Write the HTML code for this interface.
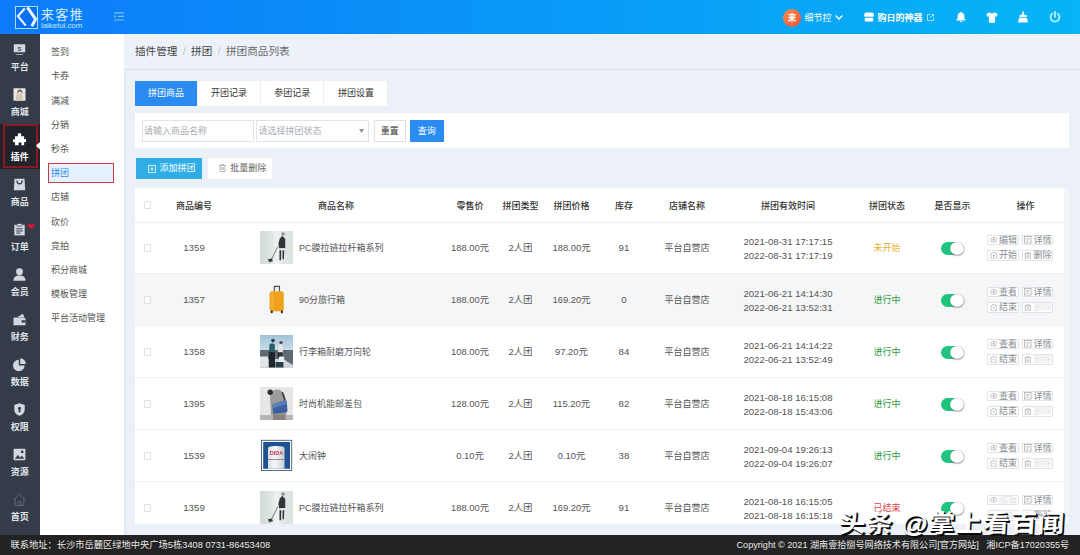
<!DOCTYPE html>
<html lang="zh-CN">
<head>
<meta charset="utf-8">
<title>拼团商品列表</title>
<style>
*{box-sizing:border-box;margin:0;padding:0}
html,body{width:1080px;height:555px;overflow:hidden}
body{position:relative;background:#ecf0f7;font-family:"Liberation Sans","Noto Sans CJK SC",sans-serif;font-size:9px;color:#555;line-height:1}
.abs{position:absolute}
/* header */
#hd{position:absolute;left:0;top:0;width:1080px;height:34px;background:linear-gradient(90deg,#0d7bfa,#06b5f5)}
#logo-box{position:absolute;left:15px;top:5.8px;width:22.5px;height:23px;border:1.3px solid #a9dcff;background:rgba(0,70,200,.22)}
#logo-t{position:absolute;left:40.8px;top:6.9px;font-size:13px;line-height:16px;color:#d3ecff;letter-spacing:1.5px;white-space:nowrap;font-weight:400}
#logo-s{position:absolute;left:41px;top:22px;font-size:7.8px;line-height:8px;color:#c9eaff;white-space:nowrap}
.hw{position:absolute;color:#fff;white-space:nowrap;font-size:9px;line-height:12px;top:11.7px}
/* dark side */
#s1{position:absolute;left:0;top:34px;width:39.5px;height:501px;background:#353c49}
.s1i{position:absolute;left:0;width:39.5px;height:45px}
.s1i span{position:absolute;left:0;width:39.5px;top:27.6px;text-align:center;font-size:9px;line-height:11px;font-weight:bold;color:#dfe3e8}
.s1i>svg:first-child{position:absolute;left:13.4px;top:9.2px;width:13px;height:13px}
/* white side */
#s2{position:absolute;left:39.5px;top:34px;width:84.5px;height:501px;background:#fff}
.s2i{position:absolute;left:11.5px;font-size:9px;line-height:12px;color:#525252;white-space:nowrap}
/* content */
#bc{position:absolute;left:135px;top:45px;font-size:10.6px;line-height:13px;color:#444;white-space:nowrap}
#bc i{font-style:normal;color:#c3c7cc;padding:0 5.4px}
#bc b{font-weight:normal;color:#6b6b6b}
.tab{position:absolute;top:81.2px;height:24.4px;width:63px;background:#fff;text-align:center;line-height:24px;font-size:9px;color:#333;border-right:1px solid #ecf0f7}
.tab.on{background:#2a8bf0;color:#fff}
#flt{position:absolute;left:135px;top:113.4px;width:934px;height:35px;background:#fff}
.inp{position:absolute;top:6.5px;height:22px;border:1px solid #e0e3e8;background:#fff;font-size:9px;line-height:21px;color:#a9adb3;padding-left:1.5px;white-space:nowrap}
.btn{position:absolute;text-align:center;white-space:nowrap}
table{border-collapse:collapse}
/* table rows */
#tb{position:absolute;left:135px;top:188px;width:929px;height:336px;background:#fff;overflow:hidden}
.tr{position:absolute;left:0;width:929px;height:52px;border-bottom:1px solid #edeff2}
.tr.g{background:#f5f6f8}
.c{position:absolute;transform:translateX(-50%);white-space:nowrap;font-size:9px;line-height:12px;top:20px;color:#555}
.th .c{font-weight:500;color:#333;top:11.7px}
.tr.th{border-bottom:1px solid #eceef1;height:35px}
.c.n{font-size:9.7px}
.c.m{font-size:9.4px}
.pi svg{filter:blur(0.45px)}
.ck{position:absolute;left:8.5px;width:7.5px;height:7.5px;border:1px solid #dcdfe4;border-radius:1px;background:#fff}
.tg{position:absolute;left:806.2px;top:19.5px;width:22.6px;height:13.5px;border-radius:7px;background:linear-gradient(90deg,#1fc47e 65%,rgba(31,196,126,0) 65%)}
.tg:after{content:"";position:absolute;right:0;top:0;width:13.5px;height:13.5px;border-radius:50%;background:#fff;box-shadow:0.3px 0.6px 1.2px rgba(0,0,0,.5),inset 0 0 0 0.4px rgba(0,0,0,.12)}
.ab{position:absolute;width:31.5px;height:10.5px;border:1px solid #e1e3e7;border-radius:1px;font-size:9px;line-height:9px;color:#8a8d92;white-space:nowrap;padding-left:11px;background:#fff}
.ab.d{color:#e1e3e7}
.ab.d svg{color:#a4a7ac}
.ab svg{position:absolute;left:1.8px;top:0.6px;width:7.6px;height:7.6px;color:#999ca1}
.dt{position:absolute;left:653px;transform:translateX(-50%);white-space:nowrap;font-size:9.6px;line-height:13.9px;top:12.6px;color:#555;text-align:center}
.pi{position:absolute;left:125px;top:9.3px;width:33px;height:33px;overflow:hidden}
.pn{position:absolute;left:164px;top:20px;font-size:9px;line-height:12px;white-space:nowrap;color:#555}
#ft{position:absolute;left:0;top:534.5px;width:1080px;height:20.5px;background:#232323;color:#e8e8e8;font-size:9px;line-height:20px;white-space:nowrap}
#wm{position:absolute;left:838.5px;top:509.7px;font-size:24.5px;line-height:28px;font-weight:bold;color:#fff;white-space:nowrap;transform-origin:left center;transform:scaleX(1.08) skewX(-3deg);text-shadow:1.6px 1.6px 0 #0a0a0a,0.8px 0.8px 0 #0a0a0a;letter-spacing:0.8px}
</style>
</head>
<body>
<!-- HEADER -->
<div id="hd">
  <div id="logo-box"><svg viewBox="0 0 22.5 23" width="22.5" height="23" style="position:absolute;left:-1.3px;top:-1.3px;overflow:visible"><path d="M9.8 2.6L2.9 10.1L10.8 19.6" fill="none" stroke="#e6f5ff" stroke-width="2.2"/><path d="M12.4 1.4L20.6 13.2L16.8 20.2" fill="none" stroke="#e6f5ff" stroke-width="3"/></svg></div>
  <div id="logo-t">来客推</div>
  <div id="logo-s">laiketui.com</div>
  <svg class="abs" style="left:113.8px;top:12.4px" width="10.4" height="9" viewBox="0 0 10.4 9"><path d="M0 0.9h10.4M3.6 4.4h6.8M0 8h10.4" stroke="#7cc4ff" stroke-width="1.1" fill="none"/><path d="M0.2 2.8L2.2 4.4L0.2 6z" fill="#7cc4ff"/></svg>
  <div class="abs" style="left:782.8px;top:8.8px;width:18.6px;height:18.6px;border-radius:50%;background:linear-gradient(135deg,#ff8f3e,#ee4f3e);color:#fff;font-size:8.6px;line-height:18.6px;text-align:center;font-weight:bold">来</div>
  <div class="hw" style="left:804.5px">细节控</div>
  <svg class="abs" style="left:835px;top:14.5px" width="8" height="5" viewBox="0 0 8 5"><path d="M0.5 0.5L4 4L7.5 0.5" stroke="#fff" stroke-width="1.3" fill="none"/></svg>
  <svg class="abs" style="left:864px;top:12px" width="10" height="10" viewBox="0 0 10 10"><path d="M1 0.5h8l1 3.3a1.2 1.2 0 0 1-1.2 1H1.2A1.2 1.2 0 0 1 0 3.8zM0.8 5.8h8.4V9.5H0.8z" fill="#fff"/></svg>
  <div class="hw" style="left:877.5px;font-weight:bold">购日的神器</div>
  <svg class="abs" style="left:926.5px;top:13.5px" width="7" height="7" viewBox="0 0 7 7"><path d="M3 0.5H0.5v6h6V4M3 4L6.5 0.5M4.3 0.5h2.2v2.2" stroke="#d4efff" stroke-width="0.8" fill="none"/></svg>
  <svg class="abs" style="left:955px;top:11px" width="12" height="12" viewBox="0 0 12 12"><path d="M6 0.8c0.5 0 0.8 0.3 0.8 0.8c1.6 0.4 2.5 1.7 2.5 3.4v2.2l1.2 1.6v0.6H1.5v-0.6l1.2-1.6V5c0-1.7 0.9-3 2.5-3.4C5.2 1.1 5.5 0.8 6 0.8zM4.8 10.1h2.4c0 0.7-0.5 1.2-1.2 1.2s-1.2-0.5-1.2-1.2z" fill="#fff"/></svg>
  <svg class="abs" style="left:985.5px;top:11.5px" width="12" height="11" viewBox="0 0 12 11"><path d="M4 0.3c0.4 0.9 1.1 1.3 2 1.3s1.6-0.4 2-1.3l3.6 1.5l-1 2.9l-1.5-0.4V10.7H2.9V4.3L1.4 4.7l-1-2.9z" fill="#fff"/></svg>
  <svg class="abs" style="left:1017px;top:11px" width="12" height="12" viewBox="0 0 12 12"><path d="M5.2 0.5h1.6v3.2h1.6c0.7 0 1.2 0.5 1.2 1.2v1H2.4v-1c0-0.7 0.5-1.2 1.2-1.2h1.6zM2.2 6.7h7.6l1.2 4.8H1z" fill="#fff"/></svg>
  <svg class="abs" style="left:1049px;top:11px" width="12" height="12" viewBox="0 0 12 12"><path d="M6 0.8v5" stroke="#bdf1ff" stroke-width="1.7" fill="none" stroke-linecap="round"/><path d="M3.4 2.6a4.4 4.4 0 1 0 5.2 0" stroke="#bdf1ff" stroke-width="1.7" fill="none" stroke-linecap="round"/></svg>
</div>

<!-- DARK SIDEBAR -->
<div id="s1">
  <div class="s1i" style="top:0px"><svg viewBox="0 0 13 13"><rect x="0.8" y="1.2" width="11.4" height="8" rx="0.5" fill="#d3d7df"/><rect x="2.8" y="11" width="7.4" height="0.9" fill="#aab0bc"/><text x="6.5" y="7.6" font-size="6" font-weight="bold" text-anchor="middle" fill="#353c49" font-family="Liberation Sans,sans-serif">S</text></svg><span>平台</span></div>
  <div class="s1i" style="top:45px"><svg viewBox="0 0 13 13"><rect x="0.5" y="0.3" width="12" height="12.4" fill="#ebe6e1"/><path d="M3 12.7V9c0-2.5 1.2-4.6 3.5-4.6s3.3 2 3.3 4.6v3.7z" fill="#d8c7b8"/><path d="M4.2 5.5c-0.3-2.5 1-4 2.6-4s3 1.3 2.7 3.8c-0.8-1-1.7-1.6-2.8-1.6s-1.8 0.6-2.5 1.8z" fill="#6b625c"/><circle cx="6.8" cy="5" r="1.5" fill="#e9d3c3"/></svg><span>商城</span></div>
  <div class="s1i" style="top:90px;background:#1f232a"><svg viewBox="0 0 13 13"><path d="M4.6 1.7a1.9 1.9 0 0 1 3.8 0c0 0.7-0.4 1-0.4 1.5h3.3v3.2c0.4 0 0.7-0.5 1.3-0.5a1.6 1.6 0 0 1 0 3.3c-0.6 0-0.9-0.5-1.3-0.5v3.8H8.2c0-0.5 0.5-0.9 0.5-1.6a1.7 1.7 0 0 0-3.4 0c0 0.7 0.5 1.1 0.5 1.6H1.7V8.9c-0.4 0-0.7 0.4-1.2 0.4a1.6 1.6 0 0 1 0-3.2c0.5 0 0.8 0.4 1.2 0.4V3.2H5c0-0.5-0.4-0.8-0.4-1.5z" fill="#fff" transform="translate(0.3,0.3) scale(0.96)"/></svg><span style="color:#fff">插件</span></div>
  <div class="s1i" style="top:135px"><svg viewBox="0 0 13 13"><path d="M1.5 0.8h10l0.7 11.4H0.8z" fill="#d3d7df"/><path d="M3.8 2.6c0 2 1.2 3.3 2.7 3.3S9.2 4.6 9.2 2.6" stroke="#353c49" stroke-width="1.2" fill="none"/></svg><span>商品</span></div>
  <div class="s1i" style="top:180px"><svg viewBox="0 0 13 13"><path d="M1.3 1.8h10.4v10.6H1.3z" fill="#d3d7df"/><rect x="3.8" y="0.5" width="5.4" height="2.6" rx="0.5" fill="#d3d7df" stroke="#353c49" stroke-width="0.7"/><path d="M3.3 5.8h6.4M3.3 8h6.4M3.3 10.1h4.2" stroke="#353c49" stroke-width="1"/></svg><span>订单</span><svg class="abs" style="left:28.4px;top:10px;width:6.6px;height:4.6px" viewBox="0 0 13 9"><path d="M6.5 9C3 7 0 5 0 2.5C0 1 1.2 0 3 0c1.5 0 2.8 0.6 3.5 1.6C7.2 0.6 8.5 0 10 0c1.8 0 3 1 3 2.5C13 5 10 7 6.5 9z" fill="#e3132f"/></svg></div>
  <div class="s1i" style="top:225px"><svg viewBox="0 0 13 13"><circle cx="6.5" cy="3.7" r="3.4" fill="#d3d7df"/><path d="M0.5 12.8c0-3.6 2.2-5.2 6-5.2s6 1.6 6 5.2z" fill="#d3d7df"/></svg><span>会员</span></div>
  <div class="s1i" style="top:270px"><svg viewBox="0 0 13 13"><path d="M0.5 4.6h10c1.3 0 2 0.7 2 1.8v5.8H0.5z" fill="#d3d7df"/><path d="M4.2 4.2l5.8-3.4l1.3 3.4z" fill="#d3d7df"/><rect x="8.6" y="7.3" width="3.9" height="2.3" fill="#353c49"/></svg><span>财务</span></div>
  <div class="s1i" style="top:315px"><svg viewBox="0 0 13 13"><path d="M5.8 1.7v5.8h5.8a5.8 5.8 0 1 1-5.8-5.8z" fill="#d3d7df"/><path d="M7.2 0.2a5.8 5.8 0 0 1 5.6 5.8H7.2z" fill="#d3d7df"/></svg><span>数据</span></div>
  <div class="s1i" style="top:360px"><svg viewBox="0 0 13 13"><path d="M6.5 0.3l5.2 1.7v4.7c0 3-2.2 5.1-5.2 6.1c-3-1-5.2-3.1-5.2-6.1V2z" fill="#d3d7df"/><circle cx="6.5" cy="5.2" r="1.5" fill="#353c49"/><path d="M5.8 5.5h1.4l0.4 3.8H5.4z" fill="#353c49"/></svg><span>权限</span></div>
  <div class="s1i" style="top:405px"><svg viewBox="0 0 13 13"><rect x="0.6" y="0.8" width="11.8" height="11.4" rx="0.8" fill="#d3d7df"/><path d="M1.8 10.8l3-3.8l2.3 2.4l1.9-1.6l2.4 3z" fill="#353c49"/><rect x="8" y="2.6" width="2.4" height="2.4" fill="#353c49"/></svg><span>资源</span></div>
  <div class="s1i" style="top:450px"><svg viewBox="0 0 13 13"><path d="M1 6.8L6.5 0.7L12 6.8M2.2 5.6v7h8.6v-7M5.2 12.6V8.6h2.6v4" stroke="#656d7b" stroke-width="0.9" fill="none"/></svg><span>首页</span></div>
  <div class="abs" style="left:3px;top:89.6px;width:34.5px;height:44px;border:2px solid #8f1622"></div>
  <svg class="abs" style="left:36px;top:108.4px" width="4" height="7.6" viewBox="0 0 4 7.6"><path d="M4 0C3 1.5 0.3 2.5 0.3 3.8S3 6.1 4 7.6z" fill="#fff"/></svg>
</div>

<!-- WHITE SIDEBAR -->
<div id="s2">
  <div class="s2i" style="top:12.2px">签到</div>
  <div class="s2i" style="top:36.39px">卡券</div>
  <div class="s2i" style="top:60.58px">满减</div>
  <div class="s2i" style="top:84.77px">分销</div>
  <div class="s2i" style="top:108.96px">秒杀</div>
  <div class="abs" style="left:8.5px;top:128.5px;width:65.5px;height:20px;background:#e6f0fc;border:1.6px solid #c83a46"></div>
  <div class="s2i" style="top:133.15px;color:#2e8df0">拼团</div>
  <div class="s2i" style="top:157.34px">店铺</div>
  <div class="s2i" style="top:181.53px">砍价</div>
  <div class="s2i" style="top:205.72px">竞拍</div>
  <div class="s2i" style="top:229.91px">积分商城</div>
  <div class="s2i" style="top:254.1px">模板管理</div>
  <div class="s2i" style="top:278.29px">平台活动管理</div>
</div>
<div class="abs" style="left:124px;top:34px;width:3px;height:501px;background:linear-gradient(90deg,#e0e4eb,#ecf0f7)"></div>

<!-- BREADCRUMB -->
<div class="abs" style="left:124px;top:34px;width:956px;height:36px;background:#edf1f8;border-bottom:1px solid #dcdfe5"></div>
<div id="bc">插件管理<i>/</i>拼团<i>/</i><b>拼团商品列表</b></div>

<!-- TABS -->
<div class="tab on" style="left:135px;width:63px">拼团商品</div>
<div class="tab" style="left:198px">开团记录</div>
<div class="tab" style="left:261px;width:63.3px">参团记录</div>
<div class="tab" style="left:324.3px;width:63.2px;border-right:0">拼团设置</div>

<!-- FILTER -->
<div id="flt">
  <div class="inp" style="left:6.5px;width:112px">请输入商品名称</div>
  <div class="inp" style="left:121px;width:112.5px">请选择拼团状态<svg class="abs" style="right:4px;top:8px" width="5" height="4" viewBox="0 0 5 4"><path d="M0 0h5L2.5 4z" fill="#8f949b"/></svg></div>
  <div class="btn" style="left:238.5px;top:6.5px;width:32.5px;height:22px;border:1px solid #dcdfe3;line-height:20px;color:#333;font-size:9px">重置</div>
  <div class="btn" style="left:275px;top:6.5px;width:33.5px;height:22px;background:#2a8bf0;line-height:22px;color:#fff;font-size:9px">查询</div>
</div>

<!-- ACTION BUTTONS -->
<div class="btn" style="left:136px;top:157.5px;width:66px;height:21.5px;background:#2fade6;color:#fff;line-height:21.5px;font-size:9px;padding-left:17px"><svg class="abs" style="left:11.5px;top:7px" width="8" height="8" viewBox="0 0 8 8"><rect x="0.5" y="0.5" width="7" height="7" fill="none" stroke="#fff" stroke-width="0.8"/><path d="M2.2 4h3.6M4 2.2v3.6" stroke="#fff" stroke-width="0.8"/></svg>添加拼团</div>
<div class="btn" style="left:207.5px;top:157.5px;width:64.5px;height:21.5px;background:#fff;color:#666;line-height:21.5px;font-size:9px;padding-left:17px"><svg class="abs" style="left:11px;top:6.5px" width="7" height="8" viewBox="0 0 7 8"><path d="M0.3 1.5h6.4M2.3 1.5V0.4h2.4V1.5M1 1.5v6h5v-6M2.7 3v3M4.3 3v3" stroke="#999" stroke-width="0.7" fill="none"/></svg>批量删除</div>

<!-- TABLE -->
<div id="tb">
  <div class="tr th" style="top:0">
    <div class="ck" style="top:13px"></div>
    <div class="c" style="left:59px">商品编号</div>
    <div class="c" style="left:201px">商品名称</div>
    <div class="c" style="left:335px">零售价</div>
    <div class="c" style="left:385.5px">拼团类型</div>
    <div class="c" style="left:436.5px">拼团价格</div>
    <div class="c" style="left:489px">库存</div>
    <div class="c" style="left:552px">店铺名称</div>
    <div class="c" style="left:653px">拼团有效时间</div>
    <div class="c" style="left:752px">拼团状态</div>
    <div class="c" style="left:817.5px">是否显示</div>
    <div class="c" style="left:890.5px">操作</div>
  </div>
  <div class="tr" style="top:34px"><div class="ck" style="top:22px"></div><div class="c n" style="left:59px">1359</div><div class="pi"><svg viewBox="0 0 33 33" width="33" height="33"><defs><linearGradient id="r0g1" x1="0" x2="1" y1="0" y2="0"><stop offset="0" stop-color="#d2dbd9"/><stop offset="0.35" stop-color="#dfe6e4"/><stop offset="0.5" stop-color="#f0f3f2"/><stop offset="0.7" stop-color="#e1e7e6"/><stop offset="1" stop-color="#d9e0df"/></linearGradient></defs><rect width="33" height="33" fill="url(#r0g1)"/><circle cx="23" cy="3" r="1.7" fill="#8d8f8e"/><path d="M22.3 4.8L25.3 8L25.2 17L19.2 17.6L18.4 12.5L19.8 7.5z" fill="#31353a"/><path d="M19.6 17.5h5l-0.3 1.8h-4.7z" fill="#f2f2f2"/><path d="M19.5 19.3h1.8l-0.3 9.9h-1.5zM22.6 19.3h1.7l-0.4 9h-1.4z" fill="#33373c"/><path d="M17.8 15.5L11.4 28.6" stroke="#6a6f72" stroke-width="0.9"/><path d="M7.8 28.2l4.2-0.6l0.8 2.7l-3.6 0.9z" fill="#3a3e42"/></svg></div><div class="pn">PC膜拉链拉杆箱系列</div><div class="c m" style="left:335px">188.00元</div><div class="c m" style="left:385.5px">2人团</div><div class="c m" style="left:436.5px">188.00元</div><div class="c n" style="left:489px">91</div><div class="c" style="left:552px">平台自营店</div><div class="dt">2021-08-31 17:17:15<br>2022-08-31 17:17:19</div><div class="c" style="left:752px;color:#e6b43a">未开始</div><div class="tg"></div><div class="ab" style="left:852px;top:12.7px"><svg viewBox="0 0 7 7"><ellipse cx="3.5" cy="3.5" rx="3" ry="2.2" fill="none" stroke="currentColor" stroke-width="0.6"/><circle cx="3.5" cy="3.5" r="0.9" fill="currentColor"/></svg>编辑</div><div class="ab" style="left:886.6px;top:12.7px"><svg viewBox="0 0 7 7"><rect x="0.5" y="0.5" width="6" height="6" fill="none" stroke="currentColor" stroke-width="0.6"/><path d="M2 2.3h3M2 3.6h3M2 4.9h2" stroke="currentColor" stroke-width="0.5"/></svg>详情</div><div class="ab" style="left:852px;top:28.3px"><svg viewBox="0 0 7 7"><circle cx="3.5" cy="3.5" r="3" fill="none" stroke="currentColor" stroke-width="0.6"/><path d="M2.8 2.2L4.8 3.5L2.8 4.8z" fill="currentColor"/></svg>开始</div><div class="ab" style="left:886.6px;top:28.3px"><svg viewBox="0 0 7 7"><path d="M0.5 1.6h6M2.4 1.6V0.6h2.2V1.6M1.2 1.6v4.9h4.6V1.6M2.8 3v2.3M4.2 3v2.3" stroke="currentColor" stroke-width="0.6" fill="none"/></svg>删除</div></div>
  <div class="tr g" style="top:86px"><div class="ck" style="top:22px"></div><div class="c n" style="left:59px">1357</div><div class="pi"><svg viewBox="0 0 33 33" width="33" height="33"><path d="M14.3 8.5V3.4h5.2V8.5" stroke="#4a4a4a" stroke-width="1.1" fill="none"/><rect x="9.6" y="8.3" width="14.2" height="20" rx="2.6" fill="#f0a21d"/><rect x="11" y="9" width="2.2" height="18.5" rx="1" fill="#f5b545" opacity="0.7"/><rect x="10.6" y="27.6" width="2.2" height="2.6" rx="0.8" fill="#3a3026"/><rect x="20.8" y="27.6" width="2.2" height="2.6" rx="0.8" fill="#3a3026"/></svg></div><div class="pn">90分旅行箱</div><div class="c m" style="left:335px">188.00元</div><div class="c m" style="left:385.5px">2人团</div><div class="c m" style="left:436.5px">169.20元</div><div class="c n" style="left:489px">0</div><div class="c" style="left:552px">平台自营店</div><div class="dt">2021-06-21 14:14:30<br>2022-06-21 13:52:31</div><div class="c" style="left:752px;color:#2c9a3e">进行中</div><div class="tg"></div><div class="ab" style="left:852px;top:12.7px"><svg viewBox="0 0 7 7"><ellipse cx="3.5" cy="3.5" rx="3" ry="2.2" fill="none" stroke="currentColor" stroke-width="0.6"/><circle cx="3.5" cy="3.5" r="0.9" fill="currentColor"/></svg>查看</div><div class="ab" style="left:886.6px;top:12.7px"><svg viewBox="0 0 7 7"><rect x="0.5" y="0.5" width="6" height="6" fill="none" stroke="currentColor" stroke-width="0.6"/><path d="M2 2.3h3M2 3.6h3M2 4.9h2" stroke="currentColor" stroke-width="0.5"/></svg>详情</div><div class="ab" style="left:852px;top:28.3px"><svg viewBox="0 0 7 7"><circle cx="3.5" cy="3.5" r="3" fill="none" stroke="currentColor" stroke-width="0.6"/><path d="M2.2 3.5h2.6" stroke="currentColor" stroke-width="0.6"/></svg>结束</div><div class="ab d" style="left:886.6px;top:28.3px"><svg viewBox="0 0 7 7"><path d="M0.5 1.6h6M2.4 1.6V0.6h2.2V1.6M1.2 1.6v4.9h4.6V1.6M2.8 3v2.3M4.2 3v2.3" stroke="currentColor" stroke-width="0.6" fill="none"/></svg>删除</div></div>
  <div class="tr" style="top:138px"><div class="ck" style="top:22px"></div><div class="c n" style="left:59px">1358</div><div class="pi"><svg viewBox="0 0 33 33" width="33" height="33"><defs><linearGradient id="r2g3" x1="0" x2="0" y1="0" y2="1"><stop offset="0" stop-color="#9fc3da"/><stop offset="1" stop-color="#cbdfe8"/></linearGradient></defs><rect width="33" height="16" fill="url(#r2g3)"/><rect y="15" width="33" height="18" fill="#cfd4d6"/><path d="M0 15h33v15l-10-6H0z" fill="#5e6971"/><rect x="0" y="21.5" width="8" height="10" fill="#e4e7e8"/><circle cx="13" cy="5.6" r="1.8" fill="#2d3a44"/><path d="M9.5 9.5c0-1.5 5-1.5 5.2 0l0.3 8H9z" fill="#2a5d6c"/><rect x="8.8" y="17" width="6.2" height="15.5" fill="#20252c"/><circle cx="21" cy="7.6" r="1.7" fill="#5a4a48"/><path d="M18.5 10.5c0-1.2 4-1.2 4 0l0.5 7h-5z" fill="#ebe3e4"/><rect x="17.5" y="17.3" width="5" height="5" fill="#2c2f36"/><rect x="19" y="21.5" width="5.2" height="10" rx="0.8" fill="#e8edef"/><rect x="15.5" y="27" width="8" height="5.5" fill="#27414c"/></svg></div><div class="pn">行李箱耐磨万向轮</div><div class="c m" style="left:335px">108.00元</div><div class="c m" style="left:385.5px">2人团</div><div class="c m" style="left:436.5px">97.20元</div><div class="c n" style="left:489px">84</div><div class="c" style="left:552px">平台自营店</div><div class="dt">2021-06-21 14:14:22<br>2022-06-21 13:52:49</div><div class="c" style="left:752px;color:#2c9a3e">进行中</div><div class="tg"></div><div class="ab" style="left:852px;top:12.7px"><svg viewBox="0 0 7 7"><ellipse cx="3.5" cy="3.5" rx="3" ry="2.2" fill="none" stroke="currentColor" stroke-width="0.6"/><circle cx="3.5" cy="3.5" r="0.9" fill="currentColor"/></svg>查看</div><div class="ab" style="left:886.6px;top:12.7px"><svg viewBox="0 0 7 7"><rect x="0.5" y="0.5" width="6" height="6" fill="none" stroke="currentColor" stroke-width="0.6"/><path d="M2 2.3h3M2 3.6h3M2 4.9h2" stroke="currentColor" stroke-width="0.5"/></svg>详情</div><div class="ab" style="left:852px;top:28.3px"><svg viewBox="0 0 7 7"><circle cx="3.5" cy="3.5" r="3" fill="none" stroke="currentColor" stroke-width="0.6"/><path d="M2.2 3.5h2.6" stroke="currentColor" stroke-width="0.6"/></svg>结束</div><div class="ab d" style="left:886.6px;top:28.3px"><svg viewBox="0 0 7 7"><path d="M0.5 1.6h6M2.4 1.6V0.6h2.2V1.6M1.2 1.6v4.9h4.6V1.6M2.8 3v2.3M4.2 3v2.3" stroke="currentColor" stroke-width="0.6" fill="none"/></svg>删除</div></div>
  <div class="tr" style="top:190px"><div class="ck" style="top:22px"></div><div class="c n" style="left:59px">1395</div><div class="pi"><svg viewBox="0 0 33 33" width="33" height="33"><rect width="33" height="33" fill="#e5e6e7"/><rect x="0" y="28" width="33" height="5" fill="#b4b5b6"/><path d="M10 10c0-4 3-7.5 7-7.5c4 0 7 3 8 8l1.5 17.5H11z" fill="#9c9c9a"/><circle cx="10.2" cy="5.3" r="2.7" fill="#2e2b2b"/><path d="M21.5 5.5l1.6-0.6l3.4 10l-1.6 0.6z" fill="#3a3d45"/><path d="M12.3 17.5L24 13.5c1.5-0.5 2.5 0 2.8 1.5l0.7 8c0.1 1.5-0.5 2.3-2 2.5l-10 1.3c-1.5 0.2-2.4-0.5-2.6-2z" fill="#3b5f9f"/><path d="M12.3 17.5L24 13.5c1.5-0.5 2.5 0 2.8 1.5l0.2 2l-14.3 4.5z" fill="#5b7db5"/><rect x="13" y="27.5" width="12.5" height="5.5" fill="#8b807d"/></svg></div><div class="pn">时尚机能邮差包</div><div class="c m" style="left:335px">128.00元</div><div class="c m" style="left:385.5px">2人团</div><div class="c m" style="left:436.5px">115.20元</div><div class="c n" style="left:489px">82</div><div class="c" style="left:552px">平台自营店</div><div class="dt">2021-08-18 16:15:08<br>2022-08-18 15:43:06</div><div class="c" style="left:752px;color:#2c9a3e">进行中</div><div class="tg"></div><div class="ab" style="left:852px;top:12.7px"><svg viewBox="0 0 7 7"><ellipse cx="3.5" cy="3.5" rx="3" ry="2.2" fill="none" stroke="currentColor" stroke-width="0.6"/><circle cx="3.5" cy="3.5" r="0.9" fill="currentColor"/></svg>查看</div><div class="ab" style="left:886.6px;top:12.7px"><svg viewBox="0 0 7 7"><rect x="0.5" y="0.5" width="6" height="6" fill="none" stroke="currentColor" stroke-width="0.6"/><path d="M2 2.3h3M2 3.6h3M2 4.9h2" stroke="currentColor" stroke-width="0.5"/></svg>详情</div><div class="ab" style="left:852px;top:28.3px"><svg viewBox="0 0 7 7"><circle cx="3.5" cy="3.5" r="3" fill="none" stroke="currentColor" stroke-width="0.6"/><path d="M2.2 3.5h2.6" stroke="currentColor" stroke-width="0.6"/></svg>结束</div><div class="ab d" style="left:886.6px;top:28.3px"><svg viewBox="0 0 7 7"><path d="M0.5 1.6h6M2.4 1.6V0.6h2.2V1.6M1.2 1.6v4.9h4.6V1.6M2.8 3v2.3M4.2 3v2.3" stroke="currentColor" stroke-width="0.6" fill="none"/></svg>删除</div></div>
  <div class="tr" style="top:242px"><div class="ck" style="top:22px"></div><div class="c n" style="left:59px">1539</div><div class="pi"><svg viewBox="0 0 33 33" width="33" height="33"><defs><linearGradient id="r4g5" x1="0" x2="1" y1="0" y2="0"><stop offset="0" stop-color="#d9dde1"/><stop offset="0.4" stop-color="#f6f7f8"/><stop offset="1" stop-color="#c9ced4"/></linearGradient></defs><rect x="1.5" y="1.3" width="30.2" height="30.2" fill="#fdfdfe" stroke="#3e5c86" stroke-width="0.9"/><rect x="3.2" y="3" width="26.8" height="26.8" fill="#1f5293"/><path d="M8 9c0-2.8 16.5-2.8 16.5 0V29.8H8z" fill="url(#r4g5)"/><rect x="8" y="20" width="16.5" height="0.9" fill="#7e858d"/><text x="16.5" y="15.6" font-size="5.6" font-weight="bold" text-anchor="middle" fill="#c73a48" font-family="Liberation Sans,sans-serif">DIDA</text></svg></div><div class="pn">大闹钟</div><div class="c m" style="left:335px">0.10元</div><div class="c m" style="left:385.5px">2人团</div><div class="c m" style="left:436.5px">0.10元</div><div class="c n" style="left:489px">38</div><div class="c" style="left:552px">平台自营店</div><div class="dt">2021-09-04 19:26:13<br>2022-09-04 19:26:07</div><div class="c" style="left:752px;color:#2c9a3e">进行中</div><div class="tg"></div><div class="ab" style="left:852px;top:12.7px"><svg viewBox="0 0 7 7"><ellipse cx="3.5" cy="3.5" rx="3" ry="2.2" fill="none" stroke="currentColor" stroke-width="0.6"/><circle cx="3.5" cy="3.5" r="0.9" fill="currentColor"/></svg>查看</div><div class="ab" style="left:886.6px;top:12.7px"><svg viewBox="0 0 7 7"><rect x="0.5" y="0.5" width="6" height="6" fill="none" stroke="currentColor" stroke-width="0.6"/><path d="M2 2.3h3M2 3.6h3M2 4.9h2" stroke="currentColor" stroke-width="0.5"/></svg>详情</div><div class="ab" style="left:852px;top:28.3px"><svg viewBox="0 0 7 7"><circle cx="3.5" cy="3.5" r="3" fill="none" stroke="currentColor" stroke-width="0.6"/><path d="M2.2 3.5h2.6" stroke="currentColor" stroke-width="0.6"/></svg>结束</div><div class="ab d" style="left:886.6px;top:28.3px"><svg viewBox="0 0 7 7"><path d="M0.5 1.6h6M2.4 1.6V0.6h2.2V1.6M1.2 1.6v4.9h4.6V1.6M2.8 3v2.3M4.2 3v2.3" stroke="currentColor" stroke-width="0.6" fill="none"/></svg>删除</div></div>
  <div class="tr" style="top:294px"><div class="ck" style="top:22px"></div><div class="c n" style="left:59px">1359</div><div class="pi"><svg viewBox="0 0 33 33" width="33" height="33"><defs><linearGradient id="r5g1" x1="0" x2="1" y1="0" y2="0"><stop offset="0" stop-color="#d2dbd9"/><stop offset="0.35" stop-color="#dfe6e4"/><stop offset="0.5" stop-color="#f0f3f2"/><stop offset="0.7" stop-color="#e1e7e6"/><stop offset="1" stop-color="#d9e0df"/></linearGradient></defs><rect width="33" height="33" fill="url(#r5g1)"/><circle cx="23" cy="3" r="1.7" fill="#8d8f8e"/><path d="M22.3 4.8L25.3 8L25.2 17L19.2 17.6L18.4 12.5L19.8 7.5z" fill="#31353a"/><path d="M19.6 17.5h5l-0.3 1.8h-4.7z" fill="#f2f2f2"/><path d="M19.5 19.3h1.8l-0.3 9.9h-1.5zM22.6 19.3h1.7l-0.4 9h-1.4z" fill="#33373c"/><path d="M17.8 15.5L11.4 28.6" stroke="#6a6f72" stroke-width="0.9"/><path d="M7.8 28.2l4.2-0.6l0.8 2.7l-3.6 0.9z" fill="#3a3e42"/></svg></div><div class="pn">PC膜拉链拉杆箱系列</div><div class="c m" style="left:335px">188.00元</div><div class="c m" style="left:385.5px">2人团</div><div class="c m" style="left:436.5px">169.20元</div><div class="c n" style="left:489px">91</div><div class="c" style="left:552px">平台自营店</div><div class="dt">2021-08-18 16:15:05<br>2021-08-18 16:15:18</div><div class="c" style="left:752px;color:#e0454a">已结束</div><div class="tg"></div><div class="ab d" style="left:852px;top:12.7px"><svg viewBox="0 0 7 7"><ellipse cx="3.5" cy="3.5" rx="3" ry="2.2" fill="none" stroke="currentColor" stroke-width="0.6"/><circle cx="3.5" cy="3.5" r="0.9" fill="currentColor"/></svg>编辑</div><div class="ab" style="left:886.6px;top:12.7px"><svg viewBox="0 0 7 7"><rect x="0.5" y="0.5" width="6" height="6" fill="none" stroke="currentColor" stroke-width="0.6"/><path d="M2 2.3h3M2 3.6h3M2 4.9h2" stroke="currentColor" stroke-width="0.5"/></svg>详情</div><div class="ab d" style="left:852px;top:28.3px"><svg viewBox="0 0 7 7"><circle cx="3.5" cy="3.5" r="3" fill="none" stroke="currentColor" stroke-width="0.6"/><path d="M2.8 2.2L4.8 3.5L2.8 4.8z" fill="currentColor"/></svg>开始</div><div class="ab" style="left:886.6px;top:28.3px"><svg viewBox="0 0 7 7"><path d="M0.5 1.6h6M2.4 1.6V0.6h2.2V1.6M1.2 1.6v4.9h4.6V1.6M2.8 3v2.3M4.2 3v2.3" stroke="currentColor" stroke-width="0.6" fill="none"/></svg>删除</div></div>
</div>
<div class="abs" style="left:1064px;top:188px;width:5px;height:336px;background:#f3f5f8"></div>

<!-- FOOTER -->
<div id="ft"><span class="abs" style="left:10.6px;font-size:9.25px">联系地址：长沙市岳麓区绿地中央广场5栋3408 0731-86453408</span><span class="abs" style="right:10.8px;font-size:9.1px">Copyright © 2021 湖南壹拾捌号网络技术有限公司[官方网站]&nbsp;&nbsp;&nbsp;湘ICP备17020355号</span></div>
<div id="wm">头条 @掌上看百闻</div>
</body>
</html>
